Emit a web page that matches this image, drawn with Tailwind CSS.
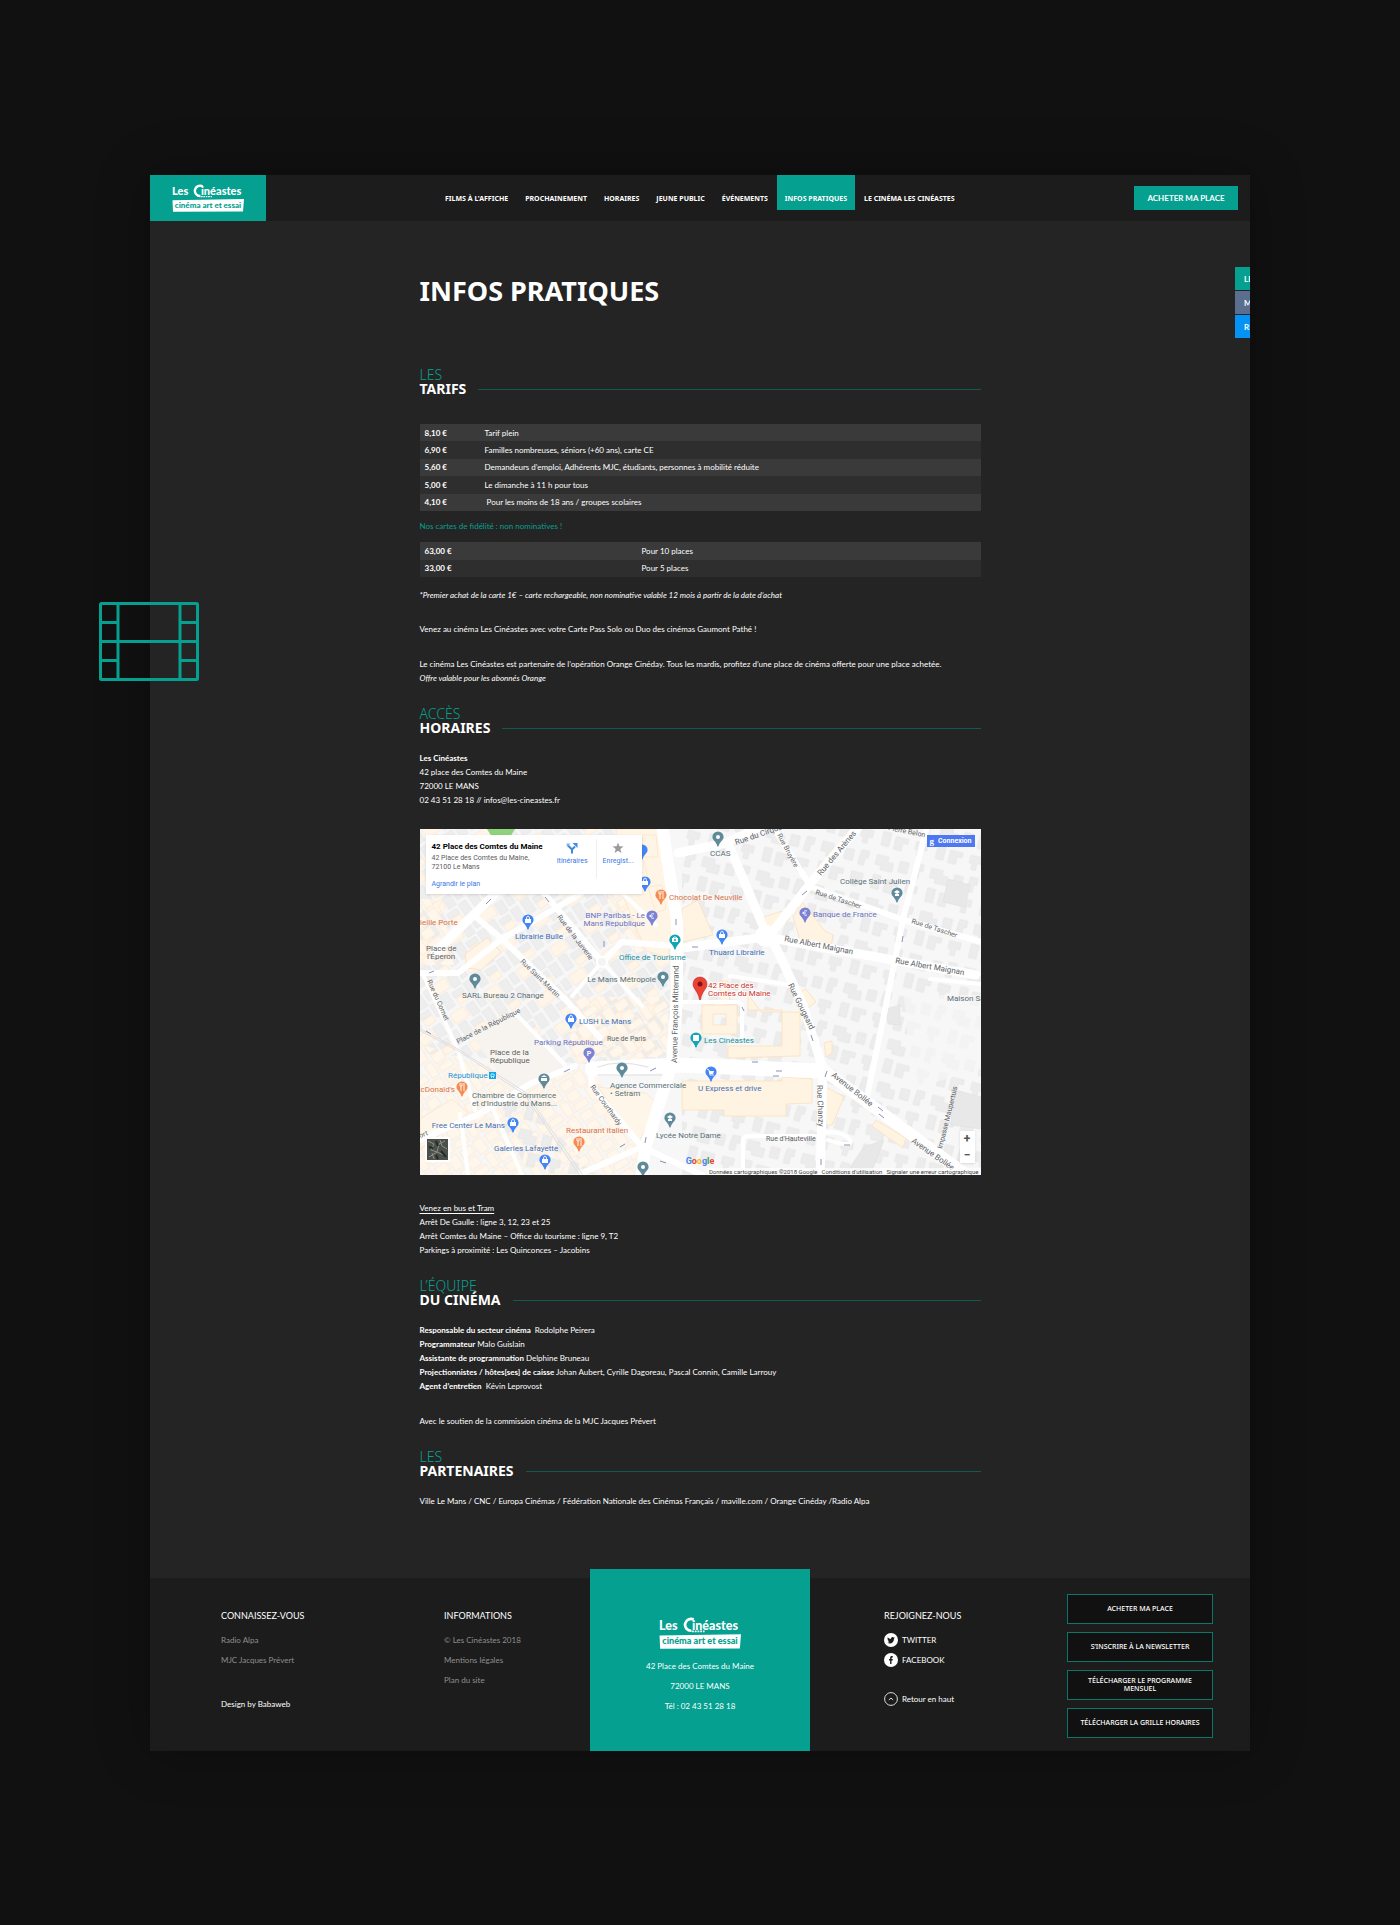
<!DOCTYPE html>
<html lang="fr">

<head>
    <meta charset="utf-8" />
    <meta name="viewport" content="width=device-width,initial-scale=1" />

    <title>Infos pratiques - Les Cinéastes</title>

    <script src="https://cdn.jsdelivr.net/npm/@tailwindcss/browser@4"></script>
</head>

<body class="bg-[#111111] font-[Lato,sans-serif] text-[8px] leading-[14px] text-white">

    <!-- Shared shapes -->
    <svg class="hidden" aria-hidden="true">
        <symbol id="logo" viewBox="0 0 72 28">
            <text x="0" y="11" font-family="Lato, sans-serif" font-weight="900" font-size="11" fill="#fff">Les</text>
            <text x="29" y="11" font-family="Lato, sans-serif" font-weight="900" font-size="11" fill="#fff">inéastes</text>
            <path d="M30.500 2.200A5.200 5.200 0 1 0 28.500 12" fill="none" stroke="#fff" stroke-width="2.400" />
            <path d="M29 12.600h11" stroke="#fff" stroke-width="1.400" stroke-dasharray="1.600 .8" />
            <path d="M0.500 16.200L72 15l-1 12.500-70 .3z" fill="#fff" />
            <text x="36" y="24" text-anchor="middle" font-family="Lato, sans-serif" font-weight="900" font-size="8" fill="#05a08f">cinéma art et essai</text>
        </symbol>
        <symbol id="pin" viewBox="-6 -6 12 16">
            <path d="M0-5.600A5.600 5.600 0 0 1 5.600 0C5.600 3.200 1.800 4.500.6 9.200Q0 10-.6 9.200C-1.800 4.500-5.600 3.200-5.600 0A5.600 5.600 0 0 1 0-5.600Z" />
        </symbol>
    </svg>

    <div class="relative mx-auto mt-[175px] mb-[174px] max-w-[1100px] bg-[#242424] shadow-[0_0_50px_rgba(0,0,0,0.3)]">

        <!-- Film strip -->
        <svg class="absolute top-[427px] -left-[51px] h-[79px] w-[100px]" viewBox="0 0 100 79" fill="none" stroke="#05a08f" stroke-width="3" aria-hidden="true">
            <rect x="1.500" y="1.500" width="97" height="76" rx="1" />
            <path d="M19 1v77M81 1v77M1 39.500h98M1 20.500h18M1 58.500h18M81 20.500h18M81 58.500h18" />
        </svg>

        <!-- Side tabs, cut off by the edge of the page -->
        <aside class="absolute top-[92px] right-0 flex w-[15px] flex-col gap-px overflow-hidden font-bold">
            <a href="#" class="flex h-[23px] items-center bg-[#05a08f] pl-[9px] whitespace-nowrap">LES FILMS</a>
            <a href="#" class="flex h-[23px] items-center bg-[#5a6f8f] pl-[9px] whitespace-nowrap">MON COMPTE</a>
            <a href="#" class="flex h-[23px] items-center bg-[#0592f5] pl-[9px] whitespace-nowrap">RÉSERVER</a>
        </aside>

        <header class="flex h-[46px] items-start bg-[#1c1c1c]">
            <a href="#" class="flex h-full w-[116px] items-center justify-center bg-[#05a08f]" aria-label="Les Cinéastes">
                <svg class="h-7 w-[72px]"><use href="#logo" /></svg>
            </a>
            <nav class="ml-[171px] flex gap-px font-['Noto_Sans',sans-serif] text-[7px] font-bold whitespace-nowrap">
                <a href="#" class="flex h-[35px] items-end px-2 pb-1">FILMS À L'AFFICHE</a>
                <a href="#" class="flex h-[35px] items-end px-2 pb-1">PROCHAINEMENT</a>
                <a href="#" class="flex h-[35px] items-end px-2 pb-1">HORAIRES</a>
                <a href="#" class="flex h-[35px] items-end px-2 pb-1">JEUNE PUBLIC</a>
                <a href="#" class="flex h-[35px] items-end px-2 pb-1">ÉVÉNEMENTS</a>
                <a href="#" class="flex h-[35px] items-end bg-[#05a08f] px-2 pb-1">INFOS PRATIQUES</a>
                <a href="#" class="flex h-[35px] items-end px-2 pb-1">LE CINÉMA LES CINÉASTES</a>
            </nav>
            <button class="mt-[11px] mr-3 ml-auto h-6 w-[104px] bg-[#05a08f] text-[8px] font-bold">ACHETER MA PLACE</button>
        </header>

        <main class="mx-auto max-w-[561px] pt-[54px] pb-[70px]">
            <h1 class="font-['Noto_Sans',sans-serif] text-[27px] leading-8 font-bold">INFOS PRATIQUES</h1>

            <section class="mt-[61px]">
                <h2 class="font-['Noto_Sans',sans-serif] text-[14px] leading-[14px]">
                    <span class="block font-light text-[#05a08f]">LES</span>
                    <span class="flex items-center gap-3 font-bold">TARIFS <span class="h-px flex-1 bg-[#12594f]"></span></span>
                </h2>
                <table class="mt-7 h-[87px] w-full text-left">
                    <tr class="bg-[#3a3a3a]"><th class="w-[65px] pl-[5px] font-bold">8,10 €</th><td>Tarif plein</td></tr>
                    <tr class="bg-[#2e2e2e]"><th class="pl-[5px] font-bold">6,90 €</th><td>Familles nombreuses, séniors (+60 ans), carte CE</td></tr>
                    <tr class="bg-[#3a3a3a]"><th class="pl-[5px] font-bold">5,60 €</th><td>Demandeurs d’emploi, Adhérents MJC, étudiants, personnes à mobilité réduite</td></tr>
                    <tr class="bg-[#2e2e2e]"><th class="pl-[5px] font-bold">5,00 €</th><td>Le dimanche à 11 h pour tous</td></tr>
                    <tr class="bg-[#3a3a3a]"><th class="pl-[5px] font-bold">4,10 €</th><td>&nbsp;Pour les moins de 18 ans / groupes scolaires</td></tr>
                </table>
                <p class="mt-2 mb-[9px] text-[#05a08f]">Nos cartes de fidélité : non nominatives !</p>
                <table class="h-[35px] w-full text-left">
                    <tr class="bg-[#3a3a3a]"><th class="w-[222px] pl-[5px] font-bold">63,00 €</th><td>Pour 10 places</td></tr>
                    <tr class="bg-[#2e2e2e]"><th class="pl-[5px] font-bold">33,00 €</th><td>Pour 5 places</td></tr>
                </table>
                <p class="mt-[11px] italic">*Premier achat de la carte 1€ – carte rechargeable, non nominative valable 12 mois à partir de la date d’achat</p>
                <p class="mt-5">Venez au cinéma Les Cinéastes avec votre Carte Pass Solo ou Duo des cinémas Gaumont Pathé !</p>
                <p class="mt-[21px]">Le cinéma Les Cinéastes est partenaire de l’opération Orange Cinéday. Tous les mardis, profitez d’une place de cinéma offerte pour une place achetée.<br /><em>Offre valable pour les abonnés Orange</em></p>
            </section>

            <section class="mt-[22px]">
                <h2 class="font-['Noto_Sans',sans-serif] text-[14px] leading-[14px]">
                    <span class="block font-light text-[#05a08f]">ACCÈS</span>
                    <span class="flex items-center gap-3 font-bold">HORAIRES <span class="h-px flex-1 bg-[#12594f]"></span></span>
                </h2>
                <p class="mt-4"><strong>Les Cinéastes</strong><br />42 place des Comtes du Maine<br />72000 LE MANS<br />02 43 51 28 18 // infos@les-cineastes.fr</p>

                <div class="relative mt-[22px] font-[Roboto,sans-serif]">
                    <svg class="block w-full" viewBox="0 0 561 346" font-family="Roboto, sans-serif" font-size="8" role="img" aria-label="Plan du quartier">
                        <defs>
                            <pattern id="blocks" width="56" height="44" patternUnits="userSpaceOnUse" patternTransform="rotate(14)">
                                <path d="M2 2h12v5h6v9H8v-4H2zM26 3h9v11h-9zM42 1h8v7h-3v8h-6v-6zM3 22h8v14H3zM16 24h13v5h-5v8h-8zM37 24h12v7h-4v7h-5v-6h-3z" fill="#ececec" stroke="#e2e2e2" stroke-width=".6" />
                            </pattern>
                            <pattern id="old" width="40" height="34" patternUnits="userSpaceOnUse" patternTransform="rotate(-34)">
                                <path d="M2 2h14v9H2zM19 2h9v13h-9zM31 1h7v11h-7zM2 14h9v16H2zM14 18h12v6H14zM29 16h9v14h-9z" fill="#eeeeef" stroke="#e5e5e5" stroke-width=".5" />
                                <path d="M15 25h11v7H15zM1 1h16v11H1z" fill="#fff6e9" stroke="#fbe3c4" stroke-width=".6" />
                            </pattern>
                            <pattern id="shops" width="36" height="30" patternUnits="userSpaceOnUse" patternTransform="rotate(56)">
                                <path d="M1 2h15v10H1zM19 1h15v8H19zM2 15h9v13H2zM14 16h10v12H14zM27 13h7v15h-7z" fill="#fff7ec" stroke="#fce4c6" stroke-width=".6" />
                            </pattern>
                        </defs>

                        <!-- Ground and buildings -->
                        <path d="M0 0h561v346H0z" fill="#f7f7f7" />
                        <path d="M262 0h299v346H262z" fill="url(#blocks)" />
                        <path d="M0 0h250v240L0 225z" fill="url(#old)" />
                        <path d="M0 215L60 235 170 237 222 320V346H0z" fill="url(#shops)" />
                        <path d="M105 270l70 75h-65L70 275z" fill="url(#blocks)" />
                        <path d="M182 62l38-8 26 62-30 8zM150 168h98v60H150zM0 70l22 0 12 66H0z" fill="url(#shops)" />
                        <path d="M196 0h45l12 90-5 38-22-6-25-60z" fill="#fff5e6" stroke="#fbe3c4" stroke-width=".7" />
                        <path d="M204 8h14v16h-14zM222 6h14l2 22h-14zM212 34l12-2 4 18-10 2zM228 58l14-2 4 24-10 4z" fill="none" stroke="#fbe3c4" stroke-width=".7" />
                        <path d="M50 205L94 180l52 60-32 14-20 10z" fill="#f7f4ef" />
                        <path d="M45 125l22-16 14 14-20 18-14-2z" fill="#fff5e6" stroke="#fbe3c4" />
                        <path d="M262 80l16-9 15 35-31 7zM328 165l13 18h39v44l-72 2v-12h54v-36h-34z" fill="#fff3e2" stroke="#fbe0bd" stroke-width=".8" />
                        <path fill-rule="evenodd" d="M282 176h35v29h-35zM293 185h13v11h-13zM300 152h8l2 22h-10z" fill="#fff3e2" stroke="#fbe0bd" stroke-width=".8" />
                        <path d="M262 252h100v-4l30 2v24l-26 1v12h-62v-6h-42zM406 258l18 10-12 28h-9zM344 88l18-6 8 8-20 14zM373 88l10-14 22 28 8 4-2 12-30-4zM376 164l10-4 10 13-10 7zM456 291l30 18-3 10-31-22zM404 214l8-2v12l-6 4z" fill="#fff3e2" stroke="#fbe0bd" stroke-width=".8" />
                        <path d="M0 290l32-20 16 14-20 16-28 20zM178 258l48 6 12 12-20 38z" fill="#fff6ea" stroke="#fbe3c4" stroke-width=".7" />
                        <path d="M528 50l22 6-5 22-22-5zM532 260l29 8v32l-30-4zM466 180l14-4v20l-12-1zM444 318l20-7-14 36h-26z" fill="#e8e8e8" stroke="#dfdfdf" stroke-width=".6" />
                        <path d="M484 166h77v74l-70 20z" fill="#f7f7f7" opacity=".65" />
                        <path d="M67 0h28l-5 8H72z" fill="#8fd27b" />

                        <!-- Roads -->
                        <g fill="none" stroke="#fff" stroke-linejoin="round" stroke-linecap="round">
                            <path stroke-width="15" d="M172 240l86-4 145 6" />
                            <path stroke-width="12" d="M242-4l15 96v76l-5 66-27 86-4 30M402 240l150 110" />
                            <path stroke-width="9" d="M258 24l48-10L340-2M308 14l38 90M440-4l-46 54-44 56 33 70 20 64-3 110M262 119l84-11 210 38M15 123L72 68 110 30" />
                            <path stroke-width="6" d="M-4 144h42l44-34 54-31 30-18M353-2l38 60 90 32 84 24M507-2l-24 92-17 86-19 92M124 64l58 69 20-20 54 4M56 88l26 22 64 61 34 38M155 237l-43 17-55 32-60 26M162 344l60-26 60 28M170 234l2 24 50 60" />
                            <path stroke-width="4" d="M2 143l36 78 17 60M72 278l30 68M95 184l50 52M323 346v-34q0-5 6-5h66M404 303q22 0 26 8t-22 0M310 147l60 9M258 173h60q4 0 4 6v29M200 62l36 34M182 133l-30 34M182 133l40 44M40 285l8 60M510 150l50 5" />
                            <circle cx="346" cy="107" r="11" fill="#fff" stroke="none" />
                            <circle cx="182" cy="133" r="5" fill="#f4f4f4" stroke-width="2" />
                            <path stroke="#dedede" stroke-width="1" d="M-5 197l43 23 67 43 57 82M-3 200l43 23 64 42 55 80M228 238q-30-8-50 0M178 246h64" />
                        </g>

                        <!-- One-way arrows -->
                        <path d="M66 75l5-5M125 68l4 5M184 118v-6M256 90v6M382 66l5-4M482 113l1-6M272 118h6M9 144l5-2M144 243l6-3M230 242l6-3M362 242h-6M338 233h-6M353 247h6M391 206l2 6M407 242l-2 6M458 278l5 4M464 289l-5-4M424 316h6M401 330v6M200 318l5-3M225 314l1-6M240 332l6 2M6 202l5 3M322 178l2 4" stroke="#8b8fb5" stroke-width="1" fill="none" />

                        <!-- Street names -->
                        <g fill="#5c6266">
                            <text transform="translate(316 16) rotate(-19)">Rue du Cirque</text>
                            <text transform="translate(357 6) rotate(62)" font-size="7">Rue Bruyère</text>
                            <text transform="translate(401 47) rotate(-50)">Rue des Arènes</text>
                            <text transform="translate(468 1) rotate(11)" font-size="7">Pierre Belon</text>
                            <text transform="translate(395 65) rotate(18)" font-size="7">Rue de Tascher</text>
                            <text transform="translate(491 94) rotate(18)" font-size="7">Rue de Tascher</text>
                            <text transform="translate(364 112) rotate(11)">Rue Albert Maignan</text>
                            <text transform="translate(475 134) rotate(10)">Rue Albert Maignan</text>
                            <text transform="translate(368 156) rotate(64)">Rue Gougeard</text>
                            <text transform="translate(137 88) rotate(53)" font-size="7">Rue de la Juiverie</text>
                            <text transform="translate(100 133) rotate(44)" font-size="7">Rue Saint-Martin</text>
                            <text transform="translate(7 152) rotate(66)" font-size="7">Rue du Cornet</text>
                            <text transform="translate(38 215) rotate(-27)" font-size="7">Place de la République</text>
                            <text transform="translate(257 234) rotate(-89)">Avenue François Mitterrand</text>
                            <text x="187" y="212" font-size="7">Rue de Paris</text>
                            <text transform="translate(170 258) rotate(54)" font-size="7">Rue Courthardy</text>
                            <text transform="translate(411 247) rotate(38)">Avenue Bollée</text>
                            <text transform="translate(491 313) rotate(35)">Avenue Bollée</text>
                            <text transform="translate(397 256) rotate(88)">Rue Chanzy</text>
                            <text x="346" y="312" font-size="7">Rue d'Hauteville</text>
                            <text transform="translate(522 320) rotate(-76)" font-size="7">Impasse Maupertuis</text>
                            <text transform="translate(0 309) rotate(-20)" font-size="7">ort</text>
                            <text x="6" y="122">Place de</text>
                            <text x="7" y="130">l'Éperon</text>
                            <text x="70" y="226">Place de la</text>
                            <text x="70" y="234">République</text>
                        </g>

                        <!-- Places -->
                        <g fill="#587078">
                            <text x="290" y="27">CCAS</text>
                            <text x="420" y="55">Collège Saint Julien</text>
                            <text x="42" y="169">SARL Bureau 2 Change</text>
                            <text x="236" y="153" text-anchor="end">Le Mans Métropole</text>
                            <text x="190" y="259">Agence Commerciale</text>
                            <text x="190" y="267">• Setram</text>
                            <text x="52" y="269">Chambre de Commerce</text>
                            <text x="52" y="277">et d'Industrie du Mans...</text>
                            <text x="236" y="309">Lycée Notre Dame</text>
                            <text x="527" y="172">Maison Saint</text>
                        </g>
                        <g fill="#3f70b8">
                            <text x="95" y="110">Librairie Bulle</text>
                            <text x="289" y="126">Thuard Librairie</text>
                            <text x="159" y="195">LUSH Le Mans</text>
                            <text x="85" y="299" text-anchor="end">Free Center Le Mans</text>
                            <text x="74" y="322">Galeries Lafayette</text>
                            <text x="278" y="262">U Express et drive</text>
                        </g>
                        <g fill="#6b73bd">
                            <text x="225" y="89" text-anchor="end">BNP Paribas - Le</text>
                            <text x="225" y="97" text-anchor="end">Mans Republique</text>
                            <text x="393" y="88">Banque de France</text>
                            <text x="114" y="216">Parking République</text>
                        </g>
                        <g fill="#d9734a">
                            <text x="249" y="71">Chocolat De Neuville</text>
                            <text x="-5" y="96">Vieille Porte</text>
                            <text x="35" y="263" text-anchor="end">McDonald's</text>
                            <text x="146" y="304">Restaurant italien</text>
                        </g>
                        <g fill="#128f9c">
                            <text x="199" y="131">Office de Tourisme</text>
                            <text x="284" y="214">Les Cinéastes</text>
                        </g>
                        <text x="28" y="249" fill="#1d93d8">République</text>
                        <path d="M69 243h7v7h-7z" fill="#0fa5e9" />
                        <path d="M71 245h3v2.500h-3zM71 249l1-1M74 249l-1-1" fill="none" stroke="#fff" stroke-width=".7" />
                        <g fill="#c9302b" stroke="#fff" stroke-width="1.500" paint-order="stroke">
                            <text x="288" y="159">42 Place des</text>
                            <text x="288" y="167">Comtes du Maine</text>
                        </g>

                        <!-- Pins -->
                        <g fill="#4285f4">
                            <use href="#pin" x="102" y="85" width="12" height="16" />
                            <use href="#pin" x="216" y="15" width="12" height="16" />
                            <use href="#pin" x="219" y="47" width="12" height="16" />
                            <use href="#pin" x="296" y="100" width="12" height="16" />
                            <use href="#pin" x="145" y="184" width="12" height="16" />
                            <use href="#pin" x="87" y="288" width="12" height="16" />
                            <use href="#pin" x="119" y="325" width="12" height="16" />
                            <use href="#pin" x="285" y="237" width="12" height="16" />
                        </g>
                        <g fill="#5f8a99">
                            <use href="#pin" x="49" y="144" width="12" height="16" />
                            <use href="#pin" x="237" y="142" width="12" height="16" />
                            <use href="#pin" x="292" y="2" width="12" height="16" />
                            <use href="#pin" x="471" y="58" width="12" height="16" />
                            <use href="#pin" x="196" y="233" width="12" height="16" />
                            <use href="#pin" x="118" y="244" width="12" height="16" />
                            <use href="#pin" x="244" y="283" width="12" height="16" />
                            <use href="#pin" x="217" y="332" width="12" height="16" />
                        </g>
                        <g fill="#7b82d4">
                            <use href="#pin" x="226" y="81" width="12" height="16" />
                            <use href="#pin" x="379" y="78" width="12" height="16" />
                            <use href="#pin" x="163" y="218" width="12" height="16" />
                        </g>
                        <g fill="#f58b51">
                            <use href="#pin" x="235" y="60" width="12" height="16" />
                            <use href="#pin" x="36" y="252" width="12" height="16" />
                            <use href="#pin" x="153" y="307" width="12" height="16" />
                        </g>
                        <g fill="#12a5b5">
                            <use href="#pin" x="249" y="105" width="12" height="16" />
                            <use href="#pin" x="270" y="203" width="12" height="16" />
                        </g>
                        <!-- Pin glyphs: bags, dots, forks, euros -->
                        <path d="M105 90h6v4h-6zM222 52h6v4h-6zM299 105h6v4h-6zM148 189h6v4h-6zM90 293h6v4h-6zM122 330h6v4h-6zM252 109h6v4h-6zM273 206h6v6h-6zM121 249h6v3h-6zM121 248l3-2 3 2zM474 63l3-2 3 2-3 2zM475 65h4v2h-4zM247 288l3-2 3 2-3 2zM248 290h4v2h-4zM289 242h5l-1 3h-3z" fill="#fff" />
                        <path d="M106.500 90q0-3 1.500-3t1.500 3M223.500 52q0-3 1.500-3t1.500 3M300.500 105q0-3 1.500-3t1.500 3M149.500 189q0-3 1.500-3t1.500 3M91.500 293q0-3 1.500-3t1.500 3M123.500 330q0-3 1.500-3t1.500 3M253 109l1-1h2l1 1M287 240l2 1 1 5h4M239 62v3h2v-3M240 65v5M243 62v8M40 254v3h2v-3M41 257v5M44 254v8M157 309v3h2v-3M158 312v5M161 309v8M234 85a2.300 2.300 0 1 0 0 4M229 87h4M387 82a2.300 2.300 0 1 0 0 4M382 84h4" stroke="#fff" stroke-width=".9" fill="none" />
                        <g fill="#fff">
                            <circle cx="55" cy="150" r="2" />
                            <circle cx="243" cy="148" r="2" />
                            <circle cx="298" cy="8" r="2" />
                            <circle cx="202" cy="239" r="2" />
                            <circle cx="223" cy="338" r="2" />
                        </g>
                        <circle cx="255" cy="111" r="1" fill="#12a5b5" />
                        <text x="169" y="227" text-anchor="middle" font-size="7" font-weight="700" fill="#fff">P</text>
                        <path d="M280 148a7 7 0 0 1 7 7c0 5-5.500 8-6.300 15q-.7 2-1.400 0C278.500 163 273 160 273 155a7 7 0 0 1 7-7z" fill="#ea4335" stroke="#c5221f" stroke-width=".6" />
                        <circle cx="280" cy="155" r="2.500" fill="#811411" />

                        <!-- Aerial view thumbnail -->
                        <path d="M5 308h25v25H5z" fill="#fff" />
                        <path d="M7 310h21v21H7z" fill="#4b504a" />
                        <path d="M8 312l6 3-3 6 6 2 2-8 6-3M9 328l8-5 9 4M20 311l2 6 5 3M12 324l2 6" stroke="#8c9088" fill="none" />
                        <path d="M16 312l2 5M9 318l4 1M21 322l5 6M16 326l2 4" stroke="#23282a" stroke-width="2" fill="none" />
                    </svg>

                    <div class="absolute top-[6px] left-[6px] flex w-[216px] justify-between bg-white py-1 pr-2 pl-[6px] text-[7px] leading-[9px] text-[#5b5b5b] shadow">
                        <div>
                            <p class="pt-[3px] text-[8px] font-bold text-black">42 Place des Comtes du Maine</p>
                            <p class="mt-[3px]">42 Place des Comtes du Maine,<br />72100 Le Mans</p>
                            <a href="#" class="mt-2 mb-px block text-[#3a78e7]">Agrandir le plan</a>
                        </div>
                        <div class="flex text-center">
                            <a href="#" class="pr-2 text-[#3a78e7]">
                                <svg class="mx-auto mt-[3px] mb-[3px] h-3 w-3" viewBox="0 0 12 12"><path d="M6 11.500V7.500L2 3.500M6 7.500l3-3" fill="none" stroke="#3a8bd8" stroke-width="2" /><path d="M6.500 1h5v5z" fill="#4285f4" /><path d="M.5 1.500h4L1 5z" fill="#7fb0f5" /></svg>
                                Itinéraires
                            </a>
                            <a href="#" class="mb-3 border-l border-[#eeeeee] pl-[6px] text-[#3a78e7]">
                                <svg class="mx-auto mt-[3px] mb-[3px] h-3 w-3" viewBox="0 0 12 12"><path d="M6 .5l1.400 3.800 4.100.2-3.200 2.500 1.100 4L6 8.700 2.600 11l1.100-4L.5 4.500l4.100-.2z" fill="#9a9a9a" /></svg>
                                Enregist...
                            </a>
                        </div>
                    </div>
                    <button class="absolute top-[6px] right-[6px] flex h-3 w-12 items-center justify-center gap-1 bg-[#4d78f2] text-[7px] font-bold"><span class="font-['Liberation_Serif',serif] text-[9px]">g</span>Connexion</button>
                    <div class="absolute right-[6px] bottom-3 flex w-[15px] flex-col items-center bg-white text-[12px] font-bold text-[#555555] shadow">
                        <button class="h-4 w-full leading-4" aria-label="Zoom avant">+</button>
                        <button class="h-4 w-full leading-4" aria-label="Zoom arrière">−</button>
                    </div>
                    <p class="absolute bottom-2 left-1/2 -translate-x-1/2 text-[9px] leading-3 font-bold"><span class="text-[#4285f4]">G</span><span class="text-[#ea4335]">o</span><span class="text-[#fbbc05]">o</span><span class="text-[#4285f4]">g</span><span class="text-[#34a853]">l</span><span class="text-[#ea4335]">e</span></p>
                    <p class="absolute right-0 bottom-0 flex gap-1 bg-white/70 px-0.5 text-[6px] leading-[7px] text-[#444444]">
                        <span>Données cartographiques ©2018 Google</span>
                        <a href="#">Conditions d'utilisation</a>
                        <a href="#">Signaler une erreur cartographique</a>
                    </p>
                </div>

                <p class="mt-[26px]"><u class="underline-offset-2">Venez en bus et Tram</u><br />Arrêt De Gaulle : ligne 3, 12, 23 et 25<br />Arrêt Comtes du Maine – Office du tourisme : ligne 9, T2<br />Parkings à proximité : Les Quinconces – Jacobins</p>
            </section>

            <section class="mt-[22px]">
                <h2 class="font-['Noto_Sans',sans-serif] text-[14px] leading-[14px]">
                    <span class="block font-light text-[#05a08f]">L’ÉQUIPE</span>
                    <span class="flex items-center gap-3 font-bold">DU CINÉMA <span class="h-px flex-1 bg-[#12594f]"></span></span>
                </h2>
                <p class="mt-4"><strong>Responsable du secteur cinéma</strong>&nbsp; Rodolphe Peirera<br /><strong>Programmateur</strong> Malo Guislain<br /><strong>Assistante de programmation</strong> Delphine Bruneau<br /><strong>Projectionnistes / hôtes[ses] de caisse</strong> Johan Aubert, Cyrille Dagoreau, Pascal Connin, Camille Larrouy<br /><strong>Agent d’entretien</strong>&nbsp; Kévin Leprovost</p>
                <p class="mt-[21px]">Avec le soutien de la commission cinéma de la MJC Jacques Prévert</p>
            </section>

            <section class="mt-[22px]">
                <h2 class="font-['Noto_Sans',sans-serif] text-[14px] leading-[14px]">
                    <span class="block font-light text-[#05a08f]">LES</span>
                    <span class="flex items-center gap-3 font-bold">PARTENAIRES <span class="h-px flex-1 bg-[#12594f]"></span></span>
                </h2>
                <p class="mt-4">Ville Le Mans / CNC / Europa Cinémas / Fédération Nationale des Cinémas Français / maville.com / Orange Cinéday /Radio Alpa</p>
            </section>
        </main>

        <footer class="grid h-[173px] grid-cols-5 bg-[#1c1c1c]">
            <div class="pt-[31px] pl-[71px] text-[#8e8e8e]">
                <h3 class="text-[9px] text-white">CONNAISSEZ-VOUS</h3>
                <ul class="mt-[7px] leading-5">
                    <li><a href="#">Radio Alpa</a></li>
                    <li><a href="#">MJC Jacques Prévert</a></li>
                </ul>
                <p class="mt-6 leading-5 text-white">Design by Babaweb</p>
            </div>
            <div class="pt-[31px] pl-[74px] text-[#8e8e8e]">
                <h3 class="text-[9px] text-white">INFORMATIONS</h3>
                <ul class="mt-[7px] leading-5">
                    <li>© Les Cinéastes 2018</li>
                    <li><a href="#">Mentions légales</a></li>
                    <li><a href="#">Plan du site</a></li>
                </ul>
            </div>
            <div class="-mt-[9px] bg-[#05a08f] pt-12 text-center leading-5">
                <svg class="mx-auto mb-[7px] h-8 w-[82px]"><use href="#logo" /></svg>
                <p>42 Place des Comtes du Maine</p>
                <p>72000 LE MANS</p>
                <p>Tél : 02 43 51 28 18</p>
            </div>
            <div class="pt-[31px] pl-[74px]">
                <h3 class="text-[9px]">REJOIGNEZ-NOUS</h3>
                <ul class="mt-[7px] leading-5">
                    <li><a href="#" class="flex items-center gap-1">
                        <svg class="h-[14px] w-[14px]" viewBox="0 0 14 14"><circle cx="7" cy="7" r="7" fill="#fff" /><path d="M10.800 4.700l-.9.3.7-.9-1 .4a1.600 1.600 0 0 0-2.700 1.400Q5 5.800 3.700 4.300q-.7 1.300.5 2.200l-.7-.2q0 1.200 1.300 1.600h-.7q.3 1 1.500 1.100-1 .8-2.300.7c3 1.800 6.700.2 6.700-4z" fill="#1c1c1c" /></svg>
                        TWITTER</a></li>
                    <li><a href="#" class="flex items-center gap-1">
                        <svg class="h-[14px] w-[14px]" viewBox="0 0 14 14"><circle cx="7" cy="7" r="7" fill="#fff" /><path d="M6.100 11V7.400H5V6h1.100V5c0-1.300.8-1.900 1.800-1.900l1 .1v1.200h-.7c-.5 0-.7.3-.7.7V6h1.300l-.2 1.400H7.500V11z" fill="#1c1c1c" /></svg>
                        FACEBOOK</a></li>
                </ul>
                <a href="#" class="mt-[19px] flex items-center gap-1 leading-5">
                    <svg class="h-[14px] w-[14px]" viewBox="0 0 14 14" fill="none" stroke="#ddd"><circle cx="7" cy="7" r="6.400" /><path d="M4.800 8L7 6l2.200 2" /></svg>
                    Retour en haut</a>
            </div>
            <div class="flex flex-col items-center gap-2 pt-4 font-['Noto_Sans',sans-serif] text-[7px] leading-2 font-medium">
                <button class="h-[30px] w-2/3 border border-[#0a7568] bg-[#111111] px-2">ACHETER MA PLACE</button>
                <button class="h-[30px] w-2/3 border border-[#0a7568] bg-[#111111] px-2">S’INSCRIRE À LA NEWSLETTER</button>
                <button class="h-[30px] w-2/3 border border-[#0a7568] bg-[#111111] px-2">TÉLÉCHARGER LE PROGRAMME MENSUEL</button>
                <button class="h-[30px] w-2/3 border border-[#0a7568] bg-[#111111] px-2">TÉLÉCHARGER LA GRILLE HORAIRES</button>
            </div>
        </footer>
    </div>
</body>

</html>
